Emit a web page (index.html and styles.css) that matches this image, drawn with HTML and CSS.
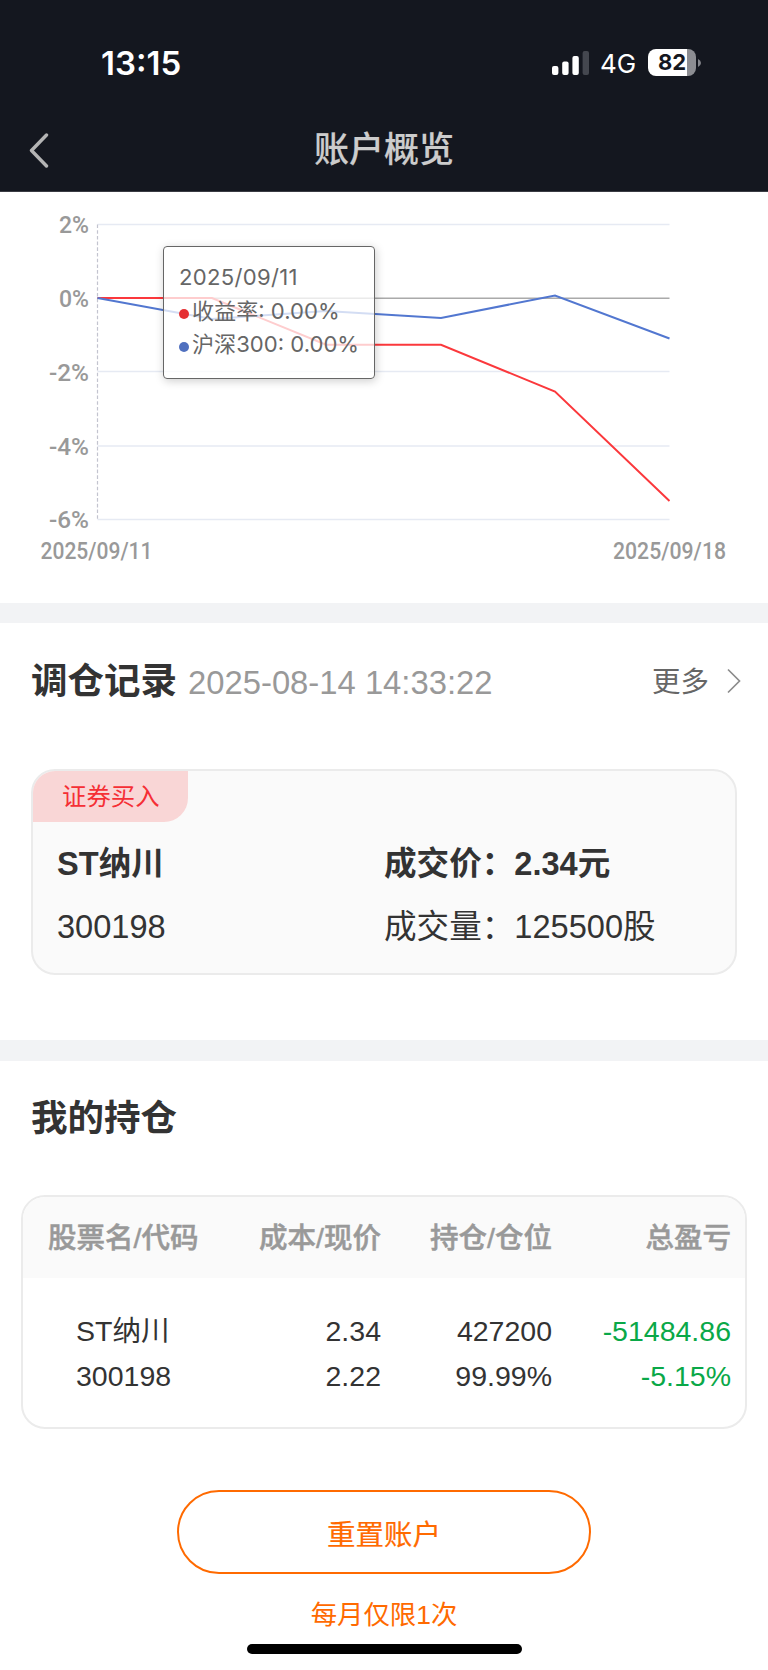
FILE: index.html
```html
<!DOCTYPE html>
<html lang="zh-CN">
<head>
    <meta charset="UTF-8">
    <meta name="viewport" content="width=device-width, initial-scale=1.0">
    <title>账户概览</title>
    <link rel="stylesheet" href="styles.css">
</head>
<body>
    <header class="header">
        <div class="status-bar">
            <span class="time">13:15</span>
            <div class="status-icons">
                <svg class="signal" width="37" height="24" viewBox="0 0 37 24">
                    <rect x="0" y="15" width="6.4" height="9" rx="2" fill="#fff"/>
                    <rect x="10.2" y="10.4" width="6.4" height="13.6" rx="2" fill="#fff"/>
                    <rect x="20.4" y="5" width="6.4" height="19" rx="2" fill="#fff"/>
                    <rect x="30.6" y="0" width="6.4" height="24" rx="2" fill="#44474f"/>
                </svg>
                <span class="network">4G</span>
                <div class="battery"><span>82</span></div>
                <svg class="battery-tip" width="3" height="8" viewBox="0 0 3 8"><path d="M0 0Q3 1.5 3 4T0 8Z" fill="#83858b"/></svg>
            </div>
        </div>
        <div class="nav-bar">
            <svg class="back" width="22" height="36" viewBox="0 0 22 36">
                <path d="M18.5 3L3.5 18.5L18.5 34" fill="none" stroke="#b4b4b4" stroke-width="3.4" stroke-linecap="round" stroke-linejoin="round"/>
            </svg>
            <h1>账户概览</h1>
        </div>
    </header>

    <section class="chart">
        <svg width="768" height="411" viewBox="0 192 768 411">
            <g stroke="#e6eaf3" stroke-width="1.3">
                <path d="M97.5 224.5H669.5"/>
                <path d="M97.5 371.5H669.5"/>
                <path d="M97.5 446H669.5"/>
                <path d="M97.5 519.5H669.5"/>
            </g>
            <path d="M97.5 298.2H669.5" stroke="#aaa" stroke-width="1.4"/>
            <path d="M97.5 224.5V519.5" stroke="#c3c4cf" stroke-width="1.2" stroke-dasharray="3.6 2.1"/>
            <polyline points="97.5,298 212,298 326,344.8 441,344.8 555,391.5 669.5,501" fill="none" stroke="#fb383c" stroke-width="2"/>
            <polyline points="97.5,298 212,319 326,311 441,318 555,295.5 669.5,338.5" fill="none" stroke="#5277d0" stroke-width="2"/>
            <g class="axis-label">
                <text x="59" y="233" textLength="30" lengthAdjust="spacingAndGlyphs">2%</text>
                <text x="59" y="306.5" textLength="30" lengthAdjust="spacingAndGlyphs">0%</text>
                <text x="49" y="380.5" textLength="40" lengthAdjust="spacingAndGlyphs">-2%</text>
                <text x="49" y="454.5" textLength="40" lengthAdjust="spacingAndGlyphs">-4%</text>
                <text x="49" y="528" textLength="40" lengthAdjust="spacingAndGlyphs">-6%</text>
                <text x="40.5" y="558.5" textLength="112" lengthAdjust="spacingAndGlyphs">2025/09/11</text>
                <text x="613" y="558.5" textLength="113" lengthAdjust="spacingAndGlyphs">2025/09/18</text>
            </g>
        </svg>
        <div class="tooltip">
            <div class="day">2025/09/11</div>
            <div><i class="dot red"></i>收益率: 0.00%</div>
            <div><i class="dot blue"></i>沪深300: 0.00%</div>
        </div>
    </section>

    <section class="records">
        <div class="section-title">
            <h2>调仓记录</h2>
            <span class="date">2025-08-14 14:33:22</span>
            <a class="more"><span>更多</span>
                <svg width="14" height="26" viewBox="0 0 14 26"><path d="M1 1.5L12.5 13L1 24.5" fill="none" stroke="#8c8c8c" stroke-width="1.7"/></svg>
            </a>
        </div>
        <div class="record-card">
            <span class="tag">证券买入</span>
            <div class="record-info">
                <b>ST纳川</b>
                <b>成交价：2.34元</b>
                <span>300198</span>
                <span>成交量：125500股</span>
            </div>
        </div>
    </section>

    <section class="holdings">
        <h2>我的持仓</h2>
        <div class="table">
            <div class="row thead">
                <span>股票名/代码</span>
                <span>成本/现价</span>
                <span>持仓/仓位</span>
                <span>总盈亏</span>
            </div>
            <div class="row tbody">
                <div class="name">ST纳川<br>300198</div>
                <div>2.34<br>2.22</div>
                <div>427200<br>99.99%</div>
                <div class="green">-51484.86<br>-5.15%</div>
            </div>
        </div>
        <button class="reset">重置账户</button>
        <p class="limit">每月仅限1次</p>
        <div class="home-bar"></div>
    </section>
</body>
</html>
```
FILE: styles.css
```css
* {
    box-sizing: border-box;
}
body {
    margin: 0;
    width: 768px;
    height: 1670px;
    overflow: hidden;
    background-color: #fff;
    color: #333;
    font-family: "Liberation Sans", "Noto Sans CJK SC", sans-serif;
}
h1, h2, p {
    margin: 0;
}
.header {
    height: 192px;
    background-color: #14171f;
    border-bottom: 1px solid #3a3c43;
}
.status-bar {
    display: flex;
    justify-content: space-between;
    height: 107px;
    padding: 43px 67px 0 101px;
    color: #fff;
    font-family: Inter, sans-serif;
}
.time {
    font-size: 33px;
    line-height: 40px;
    font-weight: 600;
}
.status-icons {
    display: flex;
    align-items: center;
    height: 39px;
}
.network {
    width: 36px;
    margin: 2px 12px 0 11px;
    font-size: 26px;
    line-height: 36px;
}
.battery {
    width: 48px;
    height: 27px;
    border-radius: 8px;
    background: linear-gradient(to right, #fff 39px, #8c8d92 39px);
    color: #14171f;
    font-size: 22px;
    font-weight: 700;
    line-height: 27px;
    text-align: center;
}
.battery-tip {
    margin-left: 2px;
}
.nav-bar {
    display: grid;
    grid-template-columns: 60px 1fr 60px;
    align-items: center;
    height: 84px;
    padding: 1px 0 0 0;
}
.back {
    margin-left: 28px;
}
h1 {
    color: #ccc;
    font-size: 35px;
    font-weight: 500;
    line-height: 50px;
    text-align: center;
    -webkit-text-stroke: 0.2px #ccc;
}
.chart {
    position: relative;
    height: 411px;
}
.chart svg {
    display: block;
}
.axis-label {
    fill: #999;
    font-family: Roboto, sans-serif;
    font-size: 23.5px;
    font-weight: 500;
}
/* floats over the chart lines */
.tooltip {
    position: absolute;
    left: 163px;
    top: 54px;
    width: 212px;
    height: 133px;
    padding: 14px 0 0 15px;
    border: 1.5px solid #666;
    border-radius: 4px;
    background-color: rgba(255, 255, 255, 0.75);
    box-shadow: 1px 2px 10px rgba(0, 0, 0, 0.2);
    color: #666;
    font-family: Inter, "Noto Sans CJK SC", sans-serif;
    font-size: 22.1px;
    line-height: 33.5px;
    white-space: nowrap;
}
.day {
    letter-spacing: 0.3px;
}
.dot {
    display: inline-block;
    width: 10px;
    height: 10px;
    margin-right: 3px;
    border-radius: 50%;
}
.red {
    background-color: #e53033;
}
.blue {
    background-color: #5070bf;
}
.records {
    height: 437px;
    padding: 31px 31px 0;
    border-top: 20px solid #f2f3f5;
}
h2 {
    font-size: 36.5px;
    line-height: 56px;
}
.section-title {
    display: flex;
    align-items: center;
    height: 56px;
}
.date {
    margin: 2px 0 0 11px;
    color: #999;
    font-size: 32.8px;
}
.more {
    display: flex;
    align-items: center;
    gap: 18px;
    margin: -2px -4px 0 auto;
    color: #666;
    font-size: 28.5px;
}
.more span {
    margin-top: -4px;
}
.record-card {
    height: 206px;
    margin-top: 59px;
    border: 2px solid #ebebeb;
    border-radius: 24px;
    background-color: #fafafa;
    overflow: hidden;
}
.tag {
    display: block;
    width: 155px;
    height: 51px;
    padding-left: 29px;
    border-bottom-right-radius: 24px;
    background-color: #f9d6d6;
    color: #f52f35;
    font-size: 24.4px;
    line-height: 51px;
}
.record-info {
    display: grid;
    grid-template-columns: 327px 1fr;
    padding: 10px 0 0 24px;
    font-size: 32.6px;
    line-height: 63px;
}
.holdings {
    padding: 30px 21px 0;
    border-top: 21px solid #f2f3f5;
}
.holdings h2 {
    padding-left: 10px;
}
.table {
    height: 234px;
    margin-top: 48px;
    border: 2px solid #ebebeb;
    border-radius: 24px;
    overflow: hidden;
    font-size: 28.5px;
}
.row {
    display: grid;
    grid-template-columns: 202px 156px 171px 1fr;
    padding-right: 14px;
    text-align: right;
}
.thead {
    height: 81px;
    background-color: #fafafa;
    color: #999;
    font-weight: 500;
    line-height: 83px;
    -webkit-text-stroke: 0.5px #999;
}
.thead span:first-child {
    padding-left: 25px;
    text-align: left;
}
.tbody {
    padding-top: 31px;
    line-height: 45px;
}
.name {
    padding-left: 53px;
    text-align: left;
}
.green {
    color: #0aa848;
}
.reset {
    display: block;
    width: 414px;
    height: 84px;
    margin: 61px auto 0;
    border: 2px solid #ff6a00;
    border-radius: 42px;
    background: none;
    color: #ff6a00;
    font-family: inherit;
    font-size: 28.5px;
    -webkit-text-stroke: 0.2px #ff6a00;
}
.limit {
    margin-top: 22px;
    color: #ff6a00;
    font-size: 26.4px;
    line-height: 38px;
    text-align: center;
}
.home-bar {
    width: 275px;
    height: 10px;
    margin: 10px auto 0;
    border-radius: 5px;
    background-color: #000;
}
```
